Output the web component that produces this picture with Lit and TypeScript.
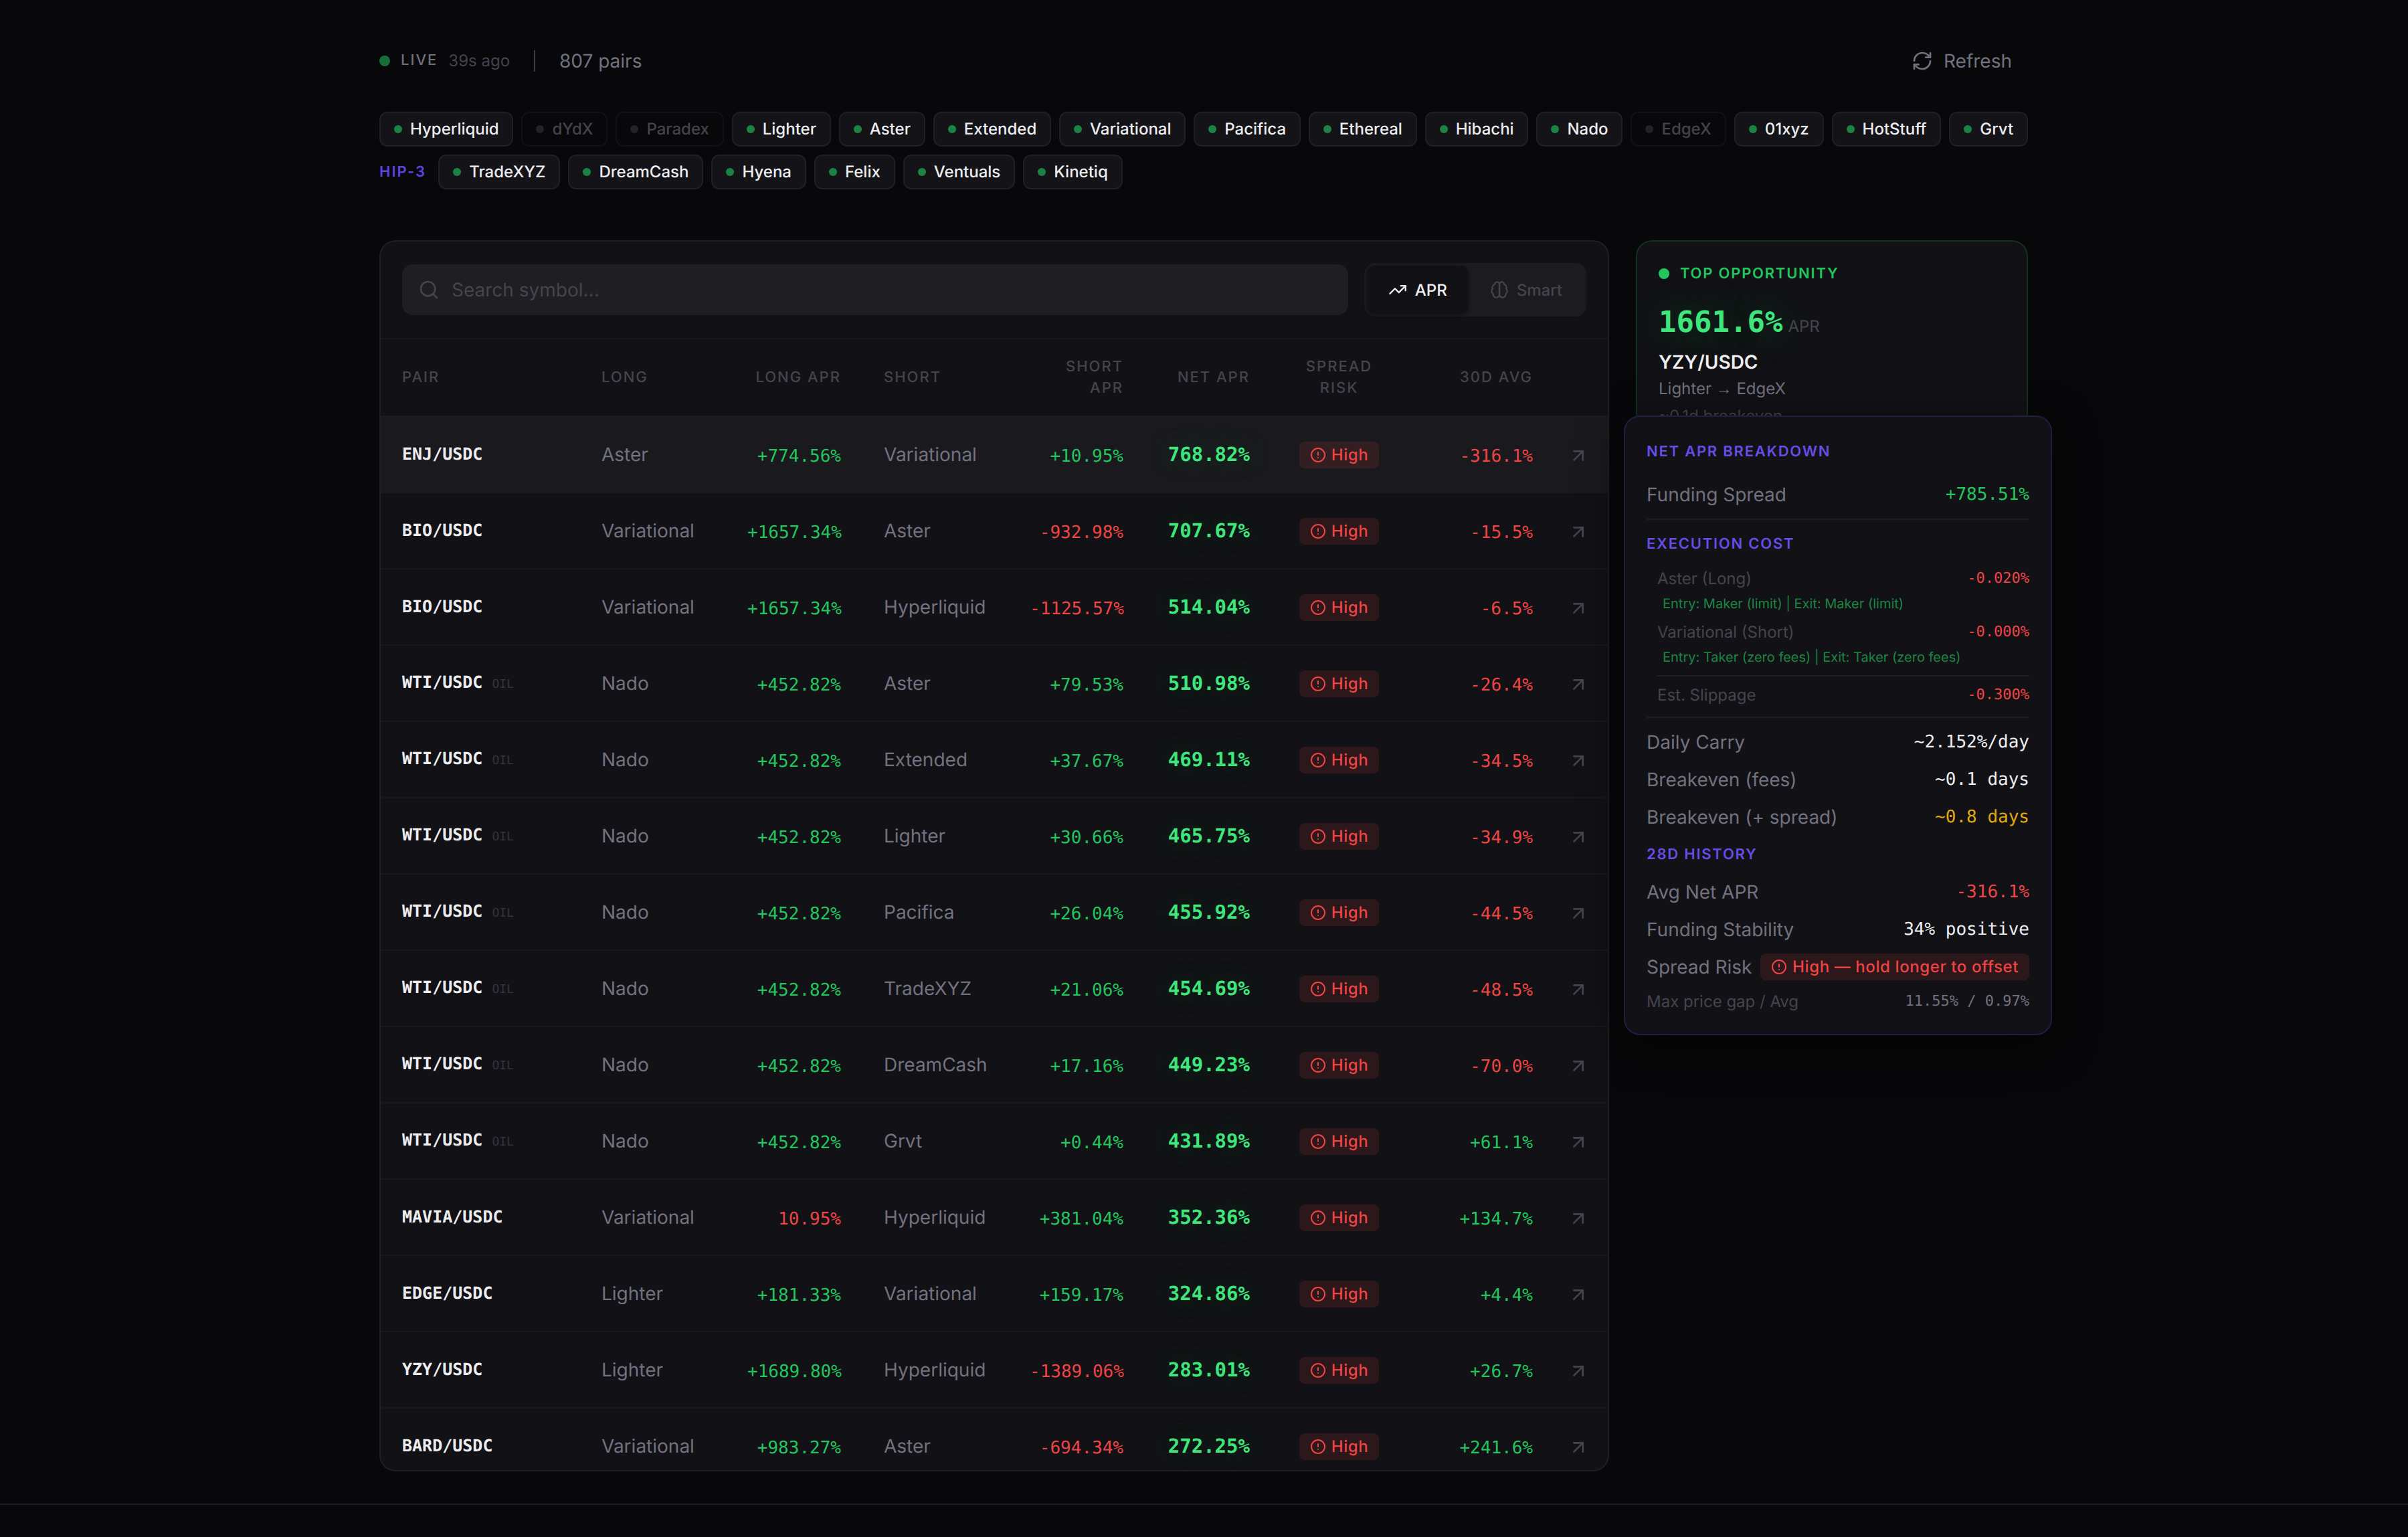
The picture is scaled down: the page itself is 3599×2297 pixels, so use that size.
import { LitElement, html, css, svg, nothing } from 'lit';
import { customElement, property, state } from 'lit/decorators.js';
import { classMap } from 'lit/directives/class-map.js';

type Chip = { name: string; off?: boolean };
type Row = [pair: string, long: string, longApr: string, short: string, shortApr: string, net: string, avg: string, tag?: string];

const EXCHANGES: Chip[] = [
  { name: 'Hyperliquid' },
  { name: 'dYdX', off: true },
  { name: 'Paradex', off: true },
  { name: 'Lighter' },
  { name: 'Aster' },
  { name: 'Extended' },
  { name: 'Variational' },
  { name: 'Pacifica' },
  { name: 'Ethereal' },
  { name: 'Hibachi' },
  { name: 'Nado' },
  { name: 'EdgeX', off: true },
  { name: '01xyz' },
  { name: 'HotStuff' },
  { name: 'Grvt' },
];

const HIP3: Chip[] = ['TradeXYZ', 'DreamCash', 'Hyena', 'Felix', 'Ventuals', 'Kinetiq'].map((name) => ({ name }));

const ROWS: Row[] = [
  ['ENJ/USDC', 'Aster', '+774.56%', 'Variational', '+10.95%', '768.82%', '-316.1%'],
  ['BIO/USDC', 'Variational', '+1657.34%', 'Aster', '-932.98%', '707.67%', '-15.5%'],
  ['BIO/USDC', 'Variational', '+1657.34%', 'Hyperliquid', '-1125.57%', '514.04%', '-6.5%'],
  ['WTI/USDC', 'Nado', '+452.82%', 'Aster', '+79.53%', '510.98%', '-26.4%', 'OIL'],
  ['WTI/USDC', 'Nado', '+452.82%', 'Extended', '+37.67%', '469.11%', '-34.5%', 'OIL'],
  ['WTI/USDC', 'Nado', '+452.82%', 'Lighter', '+30.66%', '465.75%', '-34.9%', 'OIL'],
  ['WTI/USDC', 'Nado', '+452.82%', 'Pacifica', '+26.04%', '455.92%', '-44.5%', 'OIL'],
  ['WTI/USDC', 'Nado', '+452.82%', 'TradeXYZ', '+21.06%', '454.69%', '-48.5%', 'OIL'],
  ['WTI/USDC', 'Nado', '+452.82%', 'DreamCash', '+17.16%', '449.23%', '-70.0%', 'OIL'],
  ['WTI/USDC', 'Nado', '+452.82%', 'Grvt', '+0.44%', '431.89%', '+61.1%', 'OIL'],
  ['MAVIA/USDC', 'Variational', '10.95%', 'Hyperliquid', '+381.04%', '352.36%', '+134.7%'],
  ['EDGE/USDC', 'Lighter', '+181.33%', 'Variational', '+159.17%', '324.86%', '+4.4%'],
  ['YZY/USDC', 'Lighter', '+1689.80%', 'Hyperliquid', '-1389.06%', '283.01%', '+26.7%'],
  ['BARD/USDC', 'Variational', '+983.27%', 'Aster', '-694.34%', '272.25%', '+241.6%'],
];

const ICONS = {
  refresh: svg`<path d="M3 12a9 9 0 0 1 9-9 9.75 9.75 0 0 1 6.74 2.74L21 8"/><path d="M21 3v5h-5"/><path d="M21 12a9 9 0 0 1-9 9 9.75 9.75 0 0 1-6.74-2.74L3 16"/><path d="M8 16H3v5"/>`,
  search: svg`<circle cx="11" cy="11" r="8"/><path d="m21 21-4.3-4.3"/>`,
  trend: svg`<path d="M22 7 13.5 15.5 8.5 10.5 2 17"/><path d="M16 7h6v6"/>`,
  brain: svg`<path d="M12 5a3 3 0 1 0-5.997.125 4 4 0 0 0-2.526 5.77 4 4 0 0 0 .556 6.588A4 4 0 1 0 12 18Z"/><path d="M12 5a3 3 0 1 1 5.997.125 4 4 0 0 1 2.526 5.77 4 4 0 0 1-.556 6.588A4 4 0 1 1 12 18Z"/>`,
  alert: svg`<circle cx="12" cy="12" r="10"/><path d="M12 8v4"/><path d="M12 16h.01"/>`,
  arrow: svg`<path d="M7 7h10v10"/><path d="M7 17 17 7"/>`,
};

const icon = (name: keyof typeof ICONS) => html`<svg class="icon ${name}" viewBox="0 0 24 24" aria-hidden="true">${ICONS[name]}</svg>`;

// anything without a plus sign counts against the position
const tone = (value: string) => (value.startsWith('+') ? 'up' : 'down');

const shared = css`
  * {
    box-sizing: border-box;
  }
  :host {
    text-rendering: geometricPrecision;
  }
  .icon {
    fill: none;
    stroke: currentColor;
    stroke-width: 2;
    stroke-linecap: round;
    stroke-linejoin: round;
    flex: none;
    width: 28px;
    height: 28px;
  }
  .mono {
    font-family: 'DejaVu Sans Mono', monospace;
    white-space: nowrap;
  }
  .up {
    color: #22c55e;
  }
  .down {
    color: #ef4444;
  }
  .badge {
    display: inline-flex;
    align-items: center;
    gap: 8px;
    height: 40px;
    padding: 0 16px;
    border-radius: 8px;
    background: rgba(239, 68, 68, 0.12);
    color: #ef4444;
    font-size: 24px;
    font-weight: 500;
    letter-spacing: 0.025em;
    white-space: nowrap;
  }
  .icon.alert {
    width: 24px;
    height: 24px;
  }
`;

@customElement('apr-breakdown')
export class AprBreakdown extends LitElement {
  static styles = [
    shared,
    css`
      :host {
        display: flex;
        flex-direction: column;
        gap: 16px;
        box-sizing: border-box;
        width: 640px;
        padding: 32px;
        border: 2px solid #221d41;
        border-radius: 24px;
        background: #121216;
        box-shadow: 0 16px 64px rgba(0, 0, 0, 0.6);
        font-size: 28px;
        line-height: 40px;
        color: #71717f;
      }
      h3 {
        margin: 0;
        font-size: 22px;
        font-weight: 600;
        letter-spacing: 0.08em;
        color: #654de6;
      }
      .first {
        margin-bottom: 8px;
      }
      .line {
        display: flex;
        justify-content: space-between;
        align-items: center;
      }
      .line .mono {
        font-size: 26px;
      }
      .costs {
        display: flex;
        flex-direction: column;
        gap: 12px;
        padding-left: 16px;
      }
      .small {
        font-size: 24px;
        line-height: 32px;
        color: #44444f;
      }
      .small .mono {
        font-size: 22px;
      }
      .note {
        margin: 6px 0 0;
        padding-left: 8px;
        font-size: 20px;
        line-height: 30px;
        color: #1c8442;
      }
      hr {
        width: 100%;
        height: 2px;
        margin: 0;
        border: 0;
        background: #1e1e23;
      }
      .bright {
        color: #ededf0;
        font-weight: 500;
      }
      .warn {
        color: #e0a80c;
      }
      .muted {
        color: #71717f;
      }
    `,
  ];

  line(label: string, value: string, cls: string) {
    return html`<div class="line"><span>${label}</span><span class="mono ${cls}">${value}</span></div>`;
  }

  cost(label: string, value: string, note: string) {
    return html`
      <div>
        <div class="line small"><span>${label}</span><span class="mono down">${value}</span></div>
        <p class="note">${note}</p>
      </div>
    `;
  }

  render() {
    return html`
      <h3 class="first">NET APR BREAKDOWN</h3>
      ${this.line('Funding Spread', '+785.51%', 'up')}
      <hr />
      <h3>EXECUTION COST</h3>
      <div class="costs">
        ${this.cost('Aster (Long)', '-0.020%', 'Entry: Maker (limit) | Exit: Maker (limit)')}
        ${this.cost('Variational (Short)', '-0.000%', 'Entry: Taker (zero fees) | Exit: Taker (zero fees)')}
        <hr />
        <div class="line small"><span>Est. Slippage</span><span class="mono down">-0.300%</span></div>
      </div>
      <hr />
      ${this.line('Daily Carry', '~2.152%/day', 'bright')}
      ${this.line('Breakeven (fees)', '~0.1 days', 'bright')}
      ${this.line('Breakeven (+ spread)', '~0.8 days', 'warn')}
      <h3>28D HISTORY</h3>
      ${this.line('Avg Net APR', '-316.1%', 'down')}
      ${this.line('Funding Stability', '34% positive', 'bright')}
      <div class="line"><span>Spread Risk</span><span class="badge">${icon('alert')}High — hold longer to offset</span></div>
      <div class="line small"><span>Max price gap / Avg</span><span class="mono muted">11.55% / 0.97%</span></div>
    `;
  }
}

@customElement('exchange-chip')
export class ExchangeChip extends LitElement {
  @property() name = '';
  @property({ type: Boolean }) off = false;

  static styles = css`
    :host {
      display: block;
      min-width: 0;
    }
    button {
      display: flex;
      align-items: center;
      gap: 12px;
      box-sizing: border-box;
      width: 100%;
      height: 52px;
      padding: 0 20px;
      border: 2px solid #1f1f25;
      border-radius: 12px;
      background: #141418;
      color: #ededf0;
      font: 500 24px/32px Inter, sans-serif;
      text-rendering: geometricPrecision;
      white-space: nowrap;
    }
    .dot {
      flex: none;
      width: 12px;
      height: 12px;
      border-radius: 50%;
      background: #1c8442;
    }
    .off {
      border-color: #121215;
      background: transparent;
      color: #43434d;
    }
    .off .dot {
      background: #222228;
    }
  `;

  render() {
    return html`
      <button type="button" class=${classMap({ off: this.off })} aria-pressed=${this.off ? 'false' : 'true'} @click=${() => (this.off = !this.off)}>
        <span class="dot"></span>${this.name}
      </button>
    `;
  }
}

@customElement('app-root')
export class AppRoot extends LitElement {
  @state() mode = 'apr';

  static styles = [
    shared,
    css`
      :host {
        display: block;
        min-height: 100vh;
        background: #08080a;
        color: #ededf0;
        font-family: Inter, sans-serif;
        font-size: 28px;
        line-height: 40px;
      }
      main {
        max-width: 2561px;
        margin: 0 auto;
        padding: 55px 49px 48px 48px;
      }
      button {
        font-family: inherit;
        text-rendering: inherit;
        border: 0;
        background: none;
      }
      .topbar {
        display: flex;
        align-items: center;
        gap: 36px;
        height: 72px;
        margin-bottom: 40px;
        color: #71717f;
      }
      .status {
        display: flex;
        align-items: center;
        gap: 16px;
      }
      .dot {
        width: 16px;
        height: 16px;
        border-radius: 50%;
        background: #186e38;
      }
      .live {
        font-size: 22px;
        line-height: 32px;
        font-weight: 500;
        letter-spacing: 2px;
        padding-bottom: 2px;
      }
      .ago {
        font-size: 24px;
        color: #44444f;
      }
      .bar {
        width: 2px;
        height: 32px;
        background: #3c3c47;
      }
      .refresh-btn {
        display: flex;
        align-items: center;
        gap: 16px;
        margin-left: auto;
        padding: 16px 24px;
        color: #71717f;
        font-size: 28px;
        line-height: 40px;
      }
      .icon.refresh,
      .icon.search,
      .icon.arrow {
        width: 32px;
        height: 32px;
      }
      .chips {
        display: flex;
        align-items: center;
        gap: 12px;
      }
      @media (max-width: 2559px) {
        .chips {
          flex-wrap: wrap;
        }
      }
      .hip {
        margin-top: 12px;
      }
      .hip-label {
        margin-right: 6px;
        font-size: 22px;
        font-weight: 600;
        letter-spacing: 2px;
        color: #5b45e0;
      }
      .layout {
        display: grid;
        grid-template-columns: repeat(12, 1fr);
        align-items: start;
        gap: 40px;
        margin-top: 76px;
      }
      .main-col {
        grid-column: span 9;
        position: relative;
      }
      .side-col {
        grid-column: span 3;
      }
      .card {
        border: 2px solid #1e1e24;
        border-radius: 24px;
        background: #121216;
        overflow: hidden;
      }
      .toolbar {
        display: flex;
        align-items: center;
        gap: 24px;
        padding: 32px;
        border-bottom: 2px solid #19191d;
      }
      .search-box {
        flex: 1;
        display: flex;
        align-items: center;
        gap: 18px;
        height: 76px;
        padding: 0 24px;
        border-radius: 16px;
        background: #1f1e23;
        color: #44444f;
      }
      input {
        flex: 1;
        border: 0;
        outline: 0;
        padding: 0;
        background: none;
        color: #ededf0;
        font: 400 28px/40px Inter, sans-serif;
        text-rendering: inherit;
      }
      input::placeholder {
        color: #44444f;
        opacity: 1;
      }
      .toggle {
        display: flex;
        padding: 4px;
        border-radius: 16px;
        background: #1b1b20;
      }
      .toggle button {
        display: flex;
        align-items: center;
        gap: 12px;
        height: 72px;
        padding: 0 32px;
        border-radius: 12px;
        color: #44444f;
        font-size: 24px;
        font-weight: 500;
      }
      .toggle .active {
        background: #121216;
        color: #ededf0;
        box-shadow: 0 2px 6px rgba(0, 0, 0, 0.3);
      }
      .scroller {
        max-height: 1690px;
        overflow: hidden;
      }
      table {
        width: 100%;
        table-layout: fixed;
        border-collapse: separate;
        border-spacing: 0;
      }
      .c-pair {
        width: 298px;
      }
      .c-name {
        width: 218px;
      }
      .c-apr {
        width: 204px;
      }
      .c-net {
        width: 189px;
      }
      .c-risk {
        width: 203px;
      }
      .c-avg {
        width: 220px;
      }
      .c-go {
        width: 80px;
      }
      th {
        height: 116px;
        padding: 0 32px;
        border-bottom: 2px solid #1a1a1f;
        font-size: 22px;
        line-height: 32px;
        font-weight: 500;
        letter-spacing: 2px;
        text-align: left;
        text-transform: uppercase;
        color: #44444f;
      }
      td {
        height: 114px;
        padding: 0 32px;
        border-bottom: 2px solid #18181c;
        color: #71717f;
        white-space: nowrap;
      }
      .hover td {
        background: #1a1a1e;
        border-color: #1a1a1e;
      }
      .right {
        text-align: right;
      }
      .center {
        text-align: center;
      }
      td.mono {
        font-size: 26px;
        padding-top: 6px;
      }
      td.pair {
        padding-top: 0;
        font-size: 25px;
        color: #ededf0;
        font-weight: 700;
      }
      .tag {
        margin-left: 14px;
        font-size: 18px;
        font-weight: 400;
        color: #33333c;
      }
      td.net {
        padding-top: 0;
        font-size: 29px;
        font-weight: 700;
        color: #3ee67c;
        text-shadow: 0 0 40px rgba(34, 197, 94, 0.3);
      }
      td.up {
        color: #22c55e;
      }
      td.down {
        color: #ef4444;
      }
      td .badge {
        vertical-align: middle;
      }
      td.go {
        padding: 0 28px 0 0;
        color: #44444f;
        text-align: right;
      }
      .go a {
        display: inline-flex;
        color: inherit;
        vertical-align: middle;
      }
      .top {
        padding: 32px;
        border-color: #16301f;
      }
      .top h2 {
        display: flex;
        align-items: center;
        gap: 16px;
        margin: 0 0 24px;
        font-size: 22px;
        line-height: 32px;
        font-weight: 600;
        letter-spacing: 0.08em;
        color: #22c55e;
      }
      .top .dot {
        background: #22c55e;
      }
      .rate {
        display: flex;
        align-items: baseline;
        gap: 8px;
        line-height: 66px;
      }
      .rate strong {
        font-size: 44px;
        color: #3ee67c;
        text-shadow: 0 0 60px rgba(34, 197, 94, 0.4);
      }
      .rate span {
        font-size: 24px;
        color: #44444f;
      }
      .symbol {
        font-weight: 600;
      }
      .route {
        font-size: 24px;
        color: #71717f;
      }
      .to {
        font-family: 'Liberation Sans', sans-serif;
      }
      .even {
        font-size: 24px;
        color: #44444f;
      }
      apr-breakdown {
        position: absolute;
        top: 262px;
        left: calc(100% + 22px);
      }
      footer {
        border-top: 2px solid #1c1c22;
      }
    `,
  ];

  renderRow([pair, long, longApr, short, shortApr, net, avg, tag]: Row, index: number) {
    return html`
      <tr class=${classMap({ hover: index === 0 })}>
        <td class="pair mono">${pair}${tag ? html`<span class="tag">${tag}</span>` : nothing}</td>
        <td>${long}</td>
        <td class="mono right ${tone(longApr)}">${longApr}</td>
        <td>${short}</td>
        <td class="mono right ${tone(shortApr)}">${shortApr}</td>
        <td class="mono right net">${net}</td>
        <td class="center"><span class="badge">${icon('alert')}High</span></td>
        <td class="mono right ${tone(avg)}">${avg}</td>
        <td class="go"><a href="#" aria-label="Open ${pair}">${icon('arrow')}</a></td>
      </tr>
    `;
  }

  renderToggle(id: string, label: string, name: keyof typeof ICONS) {
    return html`
      <button type="button" class=${classMap({ active: this.mode === id })} @click=${() => (this.mode = id)}>${icon(name)}${label}</button>
    `;
  }

  render() {
    return html`
      <main>
        <header class="topbar">
          <div class="status">
            <span class="dot"></span>
            <span class="live">LIVE</span>
            <span class="ago">39s ago</span>
          </div>
          <span class="bar"></span>
          <span>807 pairs</span>
          <button type="button" class="refresh-btn">${icon('refresh')}Refresh</button>
        </header>

        <div class="chips">${EXCHANGES.map((c) => html`<exchange-chip .name=${c.name} .off=${!!c.off}></exchange-chip>`)}</div>
        <div class="chips hip">
          <span class="hip-label">HIP-3</span>
          ${HIP3.map((c) => html`<exchange-chip .name=${c.name}></exchange-chip>`)}
        </div>

        <div class="layout">
          <div class="main-col">
            <section class="card">
              <div class="toolbar">
                <label class="search-box">${icon('search')}<input type="text" aria-label="Search symbol" placeholder="Search symbol..." /></label>
                <div class="toggle">${this.renderToggle('apr', 'APR', 'trend')}${this.renderToggle('smart', 'Smart', 'brain')}</div>
              </div>
              <div class="scroller">
                <table>
                  <colgroup>
                    <col class="c-pair" />
                    <col class="c-name" />
                    <col class="c-apr" />
                    <col class="c-name" />
                    <col class="c-apr" />
                    <col class="c-net" />
                    <col class="c-risk" />
                    <col class="c-avg" />
                    <col class="c-go" />
                  </colgroup>
                  <thead>
                    <tr>
                      <th>Pair</th>
                      <th>Long</th>
                      <th class="right">Long APR</th>
                      <th>Short</th>
                      <th class="right">Short<br />APR</th>
                      <th class="right">Net APR</th>
                      <th class="center">Spread Risk</th>
                      <th class="right">30D Avg</th>
                      <th></th>
                    </tr>
                  </thead>
                  <tbody>
                    ${ROWS.map((row, i) => this.renderRow(row, i))}
                  </tbody>
                </table>
              </div>
            </section>
            <apr-breakdown role="tooltip"></apr-breakdown>
          </div>

          <aside class="side-col">
            <section class="card top">
              <h2><span class="dot"></span>TOP OPPORTUNITY</h2>
              <div class="rate"><strong class="mono">1661.6%</strong><span>APR</span></div>
              <div class="symbol">YZY/USDC</div>
              <div class="route">Lighter <span class="to">→</span> EdgeX</div>
              <div class="even">~0.1d breakeven</div>
            </section>
          </aside>
        </div>
      </main>
      <footer></footer>
    `;
  }
}
